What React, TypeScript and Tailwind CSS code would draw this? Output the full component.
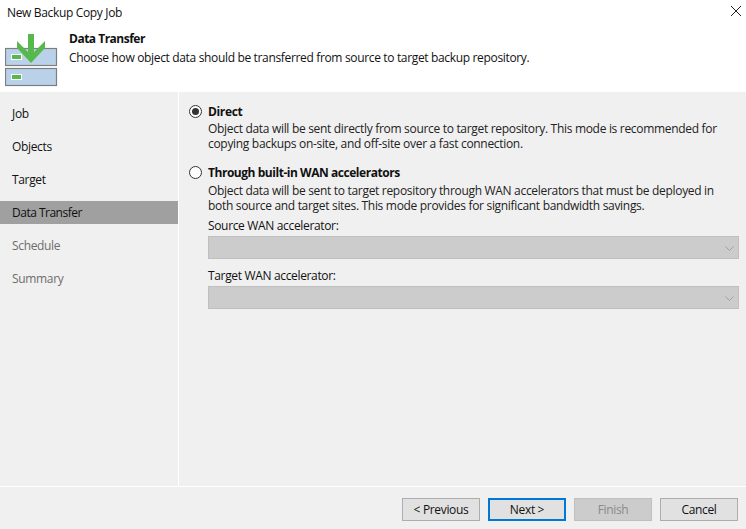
const steps = [
  { label: 'Job' },
  { label: 'Objects' },
  { label: 'Target' },
  { label: 'Data Transfer', active: true },
  { label: 'Schedule', muted: true },
  { label: 'Summary', muted: true },
];

function HeaderIcon() {
  return (
    <svg width="53" height="53" viewBox="0 0 53 53" className="block">
      <rect x="0.5" y="14.5" width="51" height="17" fill="#b9d2ea" stroke="#7f7f7f" strokeWidth="1.2" />
      <rect x="0.5" y="34.5" width="51" height="17" fill="#b9d2ea" stroke="#7f7f7f" strokeWidth="1.2" />
      <rect x="6.5" y="20.5" width="10" height="5" fill="#57b84b" stroke="#ffffff" strokeWidth="1" />
      <rect x="6.5" y="40.5" width="10" height="5" fill="#57b84b" stroke="#ffffff" strokeWidth="1" />
      <path d="M23 0h6v18l11-11v7L26 29 12 14V7l11 11z" fill="#57b84b" />
    </svg>
  );
}

function Radio({ checked }: { checked?: boolean }) {
  return (
    <span className="w-[13px] h-[13px] rounded-full border border-[#333] bg-white flex items-center justify-center shrink-0">
      {checked && <span className="w-[7px] h-[7px] rounded-full bg-[#333]" />}
    </span>
  );
}

function DisabledSelect({ label }: { label: string }) {
  return (
    <div>
      <div className="h-[17px] leading-[17px]">{label}</div>
      <div className="mt-[2px] h-[23px] bg-[#cccccc] border border-[#bfbfbf] flex items-center justify-end pr-[4px]">
        <svg width="9" height="5" viewBox="0 0 9 5" className="block mt-[1px]">
          <path d="M0.5 0.5l4 4 4-4" stroke="#a0a0a0" strokeWidth="1" fill="none" />
        </svg>
      </div>
    </div>
  );
}

function Button({ label, primary, disabled }: { label: string; primary?: boolean; disabled?: boolean }) {
  return (
    <button
      className={
        primary
          ? 'w-[78px] h-[23px] bg-[#e1e1e1] border-2 border-[#0078d7] text-[#111] leading-[19px]'
          : disabled
            ? 'w-[78px] h-[23px] bg-[#cccccc] border border-[#bfbfbf] text-[#8a8a8a] leading-[21px]'
            : 'w-[78px] h-[23px] bg-[#e1e1e1] border border-[#adadad] text-[#111] leading-[21px]'
      }
    >
      {label}
    </button>
  );
}

export default function App() {
  return (
    <div
      className="w-[746px] h-[529px] flex flex-col bg-[#f0f0f0] text-[12px] text-[#111] overflow-hidden tracking-[-0.34px]"
      style={{ fontFamily: '"Open Sans", "Noto Sans", sans-serif' }}
    >
      <div className="h-[92px] bg-white flex flex-col shrink-0">
        <div className="h-[25px] flex items-center justify-between pl-[7px] pr-[5px]">
          <span>New Backup Copy Job</span>
          <svg width="10" height="10" viewBox="0 0 10 10" className="block -mt-[3px]">
            <path d="M0 0l10 10M10 0L0 10" stroke="#222" strokeWidth="1" fill="none" />
          </svg>
        </div>
        <div className="flex pl-[5px]">
          <div className="mt-[9px] mr-[11px]">
            <HeaderIcon />
          </div>
          <div className="leading-[19px] pt-[4px]">
            <div className="font-bold tracking-[-0.5px]">Data Transfer</div>
            <div>Choose how object data should be transferred from source to target backup repository.</div>
          </div>
        </div>
      </div>

      <div className="flex-1 flex min-h-0">
        <div className="w-[178px] shrink-0 pt-[10px] flex flex-col gap-[10px]">
          {steps.map((step) => (
            <div
              key={step.label}
              className={
                step.active
                  ? 'h-[23px] leading-[23px] pl-[12px] bg-[#a0a0a0] text-[#111] tracking-[-0.5px]'
                  : step.muted
                    ? 'h-[23px] leading-[23px] pl-[12px] text-[#6d6d6d]'
                    : 'h-[23px] leading-[23px] pl-[12px] text-[#111]'
              }
            >
              {step.label}
            </div>
          ))}
        </div>
        <div className="w-[1px] bg-white shrink-0" />
        <div className="flex-1 pl-[10px] pr-[7px] pt-[11px]">
          <div className="flex items-center gap-[6px] h-[17px]">
            <Radio checked />
            <span className="font-bold">Direct</span>
          </div>
          <div className="pl-[19px] pt-[1px] leading-[15px] text-[#222] tracking-[-0.31px]">
            Object data will be sent directly from source to target repository. This mode is recommended for
            <br />
            copying backups on-site, and off-site over a fast connection.
          </div>
          <div className="flex items-center gap-[6px] h-[17px] mt-[13px]">
            <Radio />
            <span className="font-bold tracking-[-0.46px]">Through built-in WAN accelerators</span>
          </div>
          <div className="pl-[19px]">
            <div className="pt-[2px] leading-[15px] text-[#222] tracking-[-0.31px]">
              Object data will be sent to target repository through WAN accelerators that must be deployed in
              <br />
              both source and target sites. This mode provides for significant bandwidth savings.
            </div>
            <div className="mt-[4px] flex flex-col gap-[8px]">
              <DisabledSelect label="Source WAN accelerator:" />
              <DisabledSelect label="Target WAN accelerator:" />
            </div>
          </div>
        </div>
      </div>

      <div className="h-[1px] bg-white shrink-0" />
      <div className="h-[42px] shrink-0 flex justify-end gap-[8px] pr-[8px] pt-[11px]">
        <Button label="< Previous" />
        <Button label="Next >" primary />
        <Button label="Finish" disabled />
        <Button label="Cancel" />
      </div>
    </div>
  );
}
